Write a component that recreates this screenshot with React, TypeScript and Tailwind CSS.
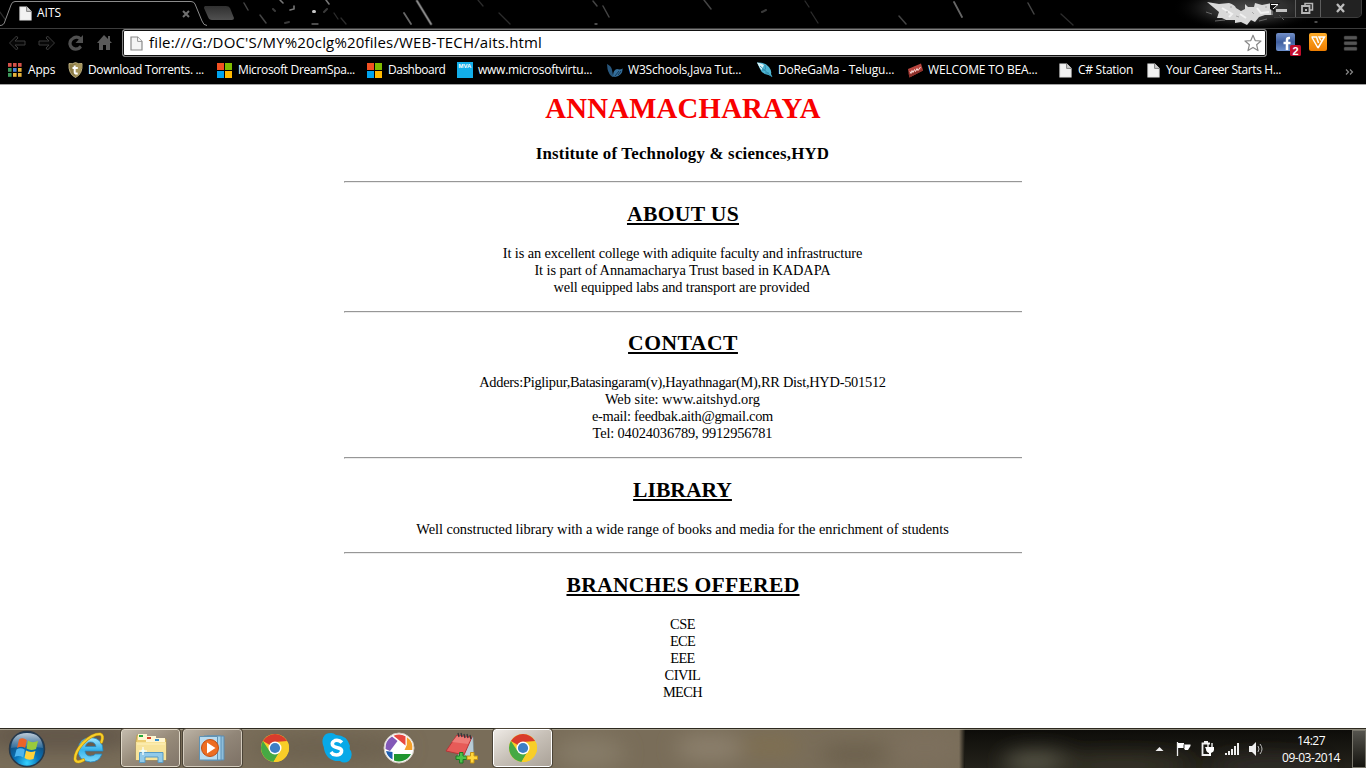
import React from "react";

type Line = { text: string; tracking?: string };

function PageIcon({ outline = false }: { outline?: boolean }) {
  return (
    <svg width="13" height="15" viewBox="0 0 13 15" className="shrink-0">
      <path
        d="M1 1H7.6L12 5.4V14H1Z"
        fill={outline ? "#f4f4f4" : "#f2f2f2"}
        stroke={outline ? "#8a8a8a" : "#e4e4e4"}
        strokeWidth="1.2"
      />
      <path d="M7.6 1V5.4H12" fill={outline ? "#fff" : "#cfcfcf"} stroke={outline ? "#8a8a8a" : "#777"} strokeWidth="0.9" />
    </svg>
  );
}

function AppsIcon() {
  const colors = ["#d5524a", "#d5524a", "#d5524a", "#3d9b5c", "#4a83d8", "#e6b23a", "#3d9b5c", "#e6b23a", "#e6b23a"];
  return (
    <svg width="14" height="14" viewBox="0 0 14 14">
      {colors.map((c, i) => (
        <rect key={i} x={(i % 3) * 5} y={Math.floor(i / 3) * 5} width="3.6" height="3.8" fill={c} />
      ))}
    </svg>
  );
}

function ShieldIcon() {
  return (
    <svg width="15" height="16" viewBox="0 0 15 16">
      <path d="M1 1.6Q4.5 2.4 7.5.6Q10.5 2.4 14 1.6Q14.8 12 7.5 15.5Q.2 12 1 1.6Z" fill="#8b7b45" stroke="#c2b482" strokeWidth="1" />
      <path d="M7.5 1V15Q13.8 11.5 13.4 2Q10 2.5 7.5 1Z" fill="#a7965b" />
      <path d="M6.7 3.5V10.3Q6.700 12 9.700 11.500M4.500 6H9.800" fill="none" stroke="#fff" strokeWidth="2" />
    </svg>
  );
}

function MicrosoftIcon() {
  return (
    <svg width="15" height="15" viewBox="0 0 15 15">
      <path d="M0 0H7V7H0Z" fill="#f25022" />
      <path d="M8 0H15V7H8Z" fill="#7fba00" />
      <path d="M0 8H7V15H0Z" fill="#00a4ef" />
      <path d="M8 8H15V15H8Z" fill="#ffb900" />
    </svg>
  );
}

function MvaIcon() {
  return (
    <span className="flex h-4 w-4 justify-center bg-[#12aeea] font-['Liberation_Sans',sans-serif] text-[6px] leading-[9px] font-bold text-white">
      MVA
    </span>
  );
}

function WingIcon() {
  return (
    <svg width="16" height="15" viewBox="0 0 16 15">
      <path d="M0 1Q4.500 3 5 7L6 12L7.500 13.500L5.500 14Q1.500 11 .5 6Z" fill="#28577d" />
      <path d="M6 13Q6 7 10 6Q13 7 15.700 5.500Q15.500 13 8 14Z" fill="#346f9d" />
      <path d="M8 13L12 8M11 12L14 8" stroke="#0d2a42" strokeWidth=".8" />
    </svg>
  );
}

function FeatherIcon() {
  return (
    <svg width="16" height="16" viewBox="0 0 16 16">
      <path d="M0 .5Q8 0 12 5Q15 9 14 12L15.500 15L11.500 13Q5 12 3 7Z" fill="#4db5d3" />
      <path d="M0 .5Q4 1 7 3L4.500 8Q2 5 0 .5Z" fill="#d9f3f8" />
      <path d="M3 4L15 15M5 8L9 8M8 11L12 11M8 3L8.500 7" stroke="#2b86a8" strokeWidth=".8" />
    </svg>
  );
}

function BeamIcon() {
  return (
    <svg width="17" height="15" viewBox="0 0 17 15">
      <path d="M1 6L14 .5L16 7.500L2.500 14.500Z" fill="#b8453e" />
      <path d="M1 9L2.500 14.500L16 7.500L15.500 6L2 11Z" fill="#8c302b" />
      <path d="M3 8.500L4 10.500L5 7.500L6 9.500L7.500 6.500L8.500 8.500L10 5.500L11 7.500L13.500 4" fill="none" stroke="#f3d5d2" strokeWidth="1" />
    </svg>
  );
}

const bookmarks: { icon: React.ReactNode; label: string; item: string; slot: string; text: string }[] = [
  { icon: <AppsIcon />, label: "Apps", item: "w-[60px]", slot: "w-5", text: "tracking-[-0.2px]" },
  { icon: <ShieldIcon />, label: "Download Torrents. ...", item: "w-[149px]", slot: "w-5", text: "tracking-[-0.34px]" },
  { icon: <MicrosoftIcon />, label: "Microsoft DreamSpa...", item: "w-[150px]", slot: "w-[21px]", text: "tracking-[-0.35px]" },
  { icon: <MicrosoftIcon />, label: "Dashboard", item: "w-[90px]", slot: "w-[21px]", text: "tracking-[-0.5px]" },
  { icon: <MvaIcon />, label: "www.microsoftvirtu...", item: "w-[150px]", slot: "w-[21px]", text: "tracking-[-0.25px]" },
  { icon: <WingIcon />, label: "W3Schools,Java Tut...", item: "w-[150px]", slot: "w-[21px]", text: "tracking-[-0.2px]" },
  { icon: <FeatherIcon />, label: "DoReGaMa - Telugu...", item: "w-[150px]", slot: "w-[21px]", text: "tracking-[-0.2px]" },
  { icon: <BeamIcon />, label: "WELCOME TO BEA...", item: "w-[152px]", slot: "w-[21px]", text: "tracking-[-0.15px]" },
  { icon: <PageIcon />, label: "C# Station", item: "w-[88px]", slot: "w-[19px]", text: "tracking-[-0.28px]" },
  { icon: <PageIcon />, label: "Your Career Starts H...", item: "w-[150px]", slot: "w-[19px]", text: "tracking-[-0.38px]" },
];

function RainBackdrop() {
  return (
    <svg className="absolute inset-0" width="1366" height="28" viewBox="0 0 1366 28">
      <defs>
        <radialGradient id="glow"><stop stopColor="#4a4a4a" /><stop offset=".5" stopColor="#2c2c2c" /><stop offset="1" stopColor="#000" stopOpacity="0" /></radialGradient>
      </defs>
      <ellipse cx="1248" cy="8" rx="76" ry="24" fill="url(#glow)" />
      <g fill="none" strokeLinecap="round">
        <path d="M417 1L431 24" strokeWidth="3" stroke="#333" />
        <path d="M417 1L431 24" strokeWidth="1.500" stroke="#8a8a8a" />
        <path d="M404 13L411 24M954 2L962 17" strokeWidth="1.800" stroke="#666" />
        <path d="M260 15L266 23M244 3L248 10M593 1L597 6M603 6L609 17M704 0L711 9M1028 3L1034 14M899 16L906 24" strokeWidth="1.500" stroke="#444" />
        <path d="M805 1L809 7M811 12L818 23M478 0L483 6M499 13L510 24M334 13L338 19M341 18L346 24M1061 14L1073 25M0 12L7 22" strokeWidth="1.300" stroke="#2c2c2c" />
        <path d="M280 0L283 3M326 0L329 4M290 10L294 9L294 6" strokeWidth="1.600" stroke="#777" />
        <path d="M595 24H597M312 24H318M1315 22H1317" strokeWidth="1.300" stroke="#666" />
        <path d="M313.500 11.500H314.500" strokeWidth="3" stroke="#c8c8c8" />
        <path d="M324 12L327 9M762 12L766 10M273 9L275 11M285 23L289 22" strokeWidth="2" stroke="#3a3a3a" />
      </g>
      <path
        d="M1207 2L1219 4L1229 3Q1235 5 1236 8L1241 11L1245 9L1245 4L1248 7L1254 7L1255 3L1262 5L1272 3L1273 15L1265 15L1259 17L1255 22L1251 20L1247 25L1241 22L1235 23V20L1226 20L1222 18L1217 18L1219 12Z"
        fill="#d9d9d9"
      />
      <path d="M1222 8L1232 14L1229 17M1257 8L1261 13L1269 12M1240 14L1246 18" stroke="#f2f2f2" strokeWidth="2" fill="none" />
      <path d="M1226 12H1228M1236 16L1239 17M1252 12L1254 14M1265 7H1267M1230 7H1232" stroke="#aaa" />
      <path d="M1215 21L1225 20M1259 21L1267 19M1279 15L1284 20M1206 12L1212 14" stroke="#666" strokeWidth="1" />
    </svg>
  );
}

function TabStrip() {
  return (
    <div className="relative flex h-7 items-start bg-black">
      <RainBackdrop />
      <svg className="absolute inset-0" width="240" height="28" viewBox="0 0 240 28">
        <path d="M0 25Q4 25 5 21L11 5Q12 1.500 15 1.500H191Q194 1.500 195 4L202 21Q203.500 25 207 25V28H0Z" fill="#000" />
        <path d="M0 25.500Q4 25.500 5 21L11 5Q12 1.500 15 1.500H191Q194 1.500 195 4L202 21Q203.500 25.500 207 25.500" fill="none" stroke="#8b8b8b" />
        <defs>
          <linearGradient id="newtab" x2="0" y2="1"><stop stopColor="#303030" /><stop offset="1" stopColor="#505050" /></linearGradient>
        </defs>
        <path d="M205 6H226Q229 6 230 8L234 18Q234 20 232 20H212Q209 20 208 17L204 8Q204 6.500 205 6Z" fill="url(#newtab)" />
      </svg>
      <div className="relative flex h-[26px] w-[192px] items-center pl-[19px]">
        <PageIcon />
        <span className="ml-[5px] text-[12px] leading-4 text-white">AITS</span>
        <svg className="mt-px mr-[2px] ml-auto" width="8" height="8" viewBox="0 0 8 8">
          <path d="M1 1L7 7M7 1L1 7" stroke="#707070" strokeWidth="2" />
        </svg>
      </div>
      <svg className="relative mr-[4px] ml-auto" width="92" height="18" viewBox="0 0 92 18">
        <path d="M25 0H91V13Q91 17 87 17H25Z" fill="#222" />
        <path d="M1 0H25V17H5Q1 17 1 13Z" fill="#333" opacity=".55" />
        <path d="M25.500 0V17M50.500 0V17" stroke="#5d5d5d" />
        <path d="M4 17.500H87Q91.500 17 91.500 13V0" stroke="#3d3d3d" fill="none" />
        <path d="M6 9H17V12H6Z" fill="#c4c4c4" />
        <path d="M0 3H10L5 8V12L0 9Z" fill="#151515" />
        <path d="M1 4.500H8L3 9" fill="none" stroke="#fff" />
        <path d="M35 6V3.500H42.500V10H40" fill="none" stroke="#b5b5b5" strokeWidth="1.500" />
        <path d="M32 6H39.500V13H32Z" fill="none" stroke="#b5b5b5" strokeWidth="1.800" />
        <path d="M35 9H37V11H35Z" fill="#b5b5b5" />
        <path d="M67 4L74 12M74 4L67 12" stroke="#bcbcbc" strokeWidth="2.300" />
      </svg>
    </div>
  );
}

function Toolbar() {
  return (
    <div className="flex h-[29px] items-center border-t border-[#3c3c3c] bg-black">
      <svg width="122" height="28" viewBox="0 0 122 28" className="shrink-0">
        <path d="M9.500 14L16.500 7L18 9L15 12H25V16H15L18 19L16.500 21Z" fill="#070707" stroke="#3b3b3b" />
        <path d="M54.500 14L47.500 7L46 9L49 12H39V16H49L46 19L47.500 21Z" fill="#070707" stroke="#3b3b3b" />
        <path d="M80.500 10Q77.500 7 73.500 9Q68.500 12 70.500 17Q73.500 21.500 78.500 19.500L81 17.500" fill="none" stroke="#505050" strokeWidth="3.200" />
        <path d="M83 6V14H75.500Z" fill="#505050" />
        <path d="M104 6L112 14H110V21H106V16H103V21H99V14H97Z" fill="#5a5a5a" />
        <path d="M108 7H110V12H108Z" fill="#5a5a5a" />
      </svg>
      <div className="flex h-7 w-[1145px] shrink-0 items-center rounded-[3px] border border-[#7f7f7f] bg-white pr-[4px] pl-[7px] shadow-[inset_0_0_0_1px_#111]">
        <PageIcon outline />
        <span className="ml-[6px] pb-[2px] text-[15px] leading-5 tracking-[0.16px] whitespace-nowrap text-black">
          file:///G:/DOC'S/MY%20clg%20files/WEB-TECH/aits.html
        </span>
        <svg className="ml-auto" width="18" height="18" viewBox="0 0 18 18">
          <path d="M9 1.200L11.200 6.600L17 7L12.600 10.700L14 16.600L9 13.400L4 16.600L5.400 10.700L1 7L6.800 6.600Z" fill="#fff" stroke="#888" strokeWidth="1.200" strokeLinejoin="round" />
        </svg>
      </div>
      <svg className="shrink-0" width="99" height="28" viewBox="0 0 99 28">
        <defs>
          <linearGradient id="fb" x2="0" y2="1"><stop stopColor="#7390c9" /><stop offset=".5" stopColor="#405f9f" /><stop offset="1" stopColor="#6f91ce" /></linearGradient>
          <linearGradient id="vor" x2="0" y2="1"><stop stopColor="#ffad29" /><stop offset="1" stopColor="#ed7d00" /></linearGradient>
        </defs>
        <rect x="9" y="4" width="19" height="18" rx="2" fill="url(#fb)" />
        <path d="M23 9H22Q20 9 20 11V21M16.500 14H23.500" fill="none" stroke="#fff" strokeWidth="2.500" />
        <rect x="23" y="16" width="11" height="11" rx="1.500" fill="#c10d2c" />
        <text x="28.500" y="25.500" textAnchor="middle" fontFamily="Liberation Sans" fontSize="11" fontWeight="700" fill="#fff">2</text>
        <rect x="42" y="4" width="18" height="18" rx="2" fill="url(#vor)" />
        <path d="M44.500 8H49.500L51.500 14M51 19L45 8.500M51 19L57.500 8H52L54 11.500" fill="none" stroke="#fff" strokeWidth="1.500" />
        <g fill="#555" stroke="#2d2d2d" strokeWidth=".5">
          <rect x="77" y="7" width="13" height="3.500" rx="1" /><rect x="77" y="12.500" width="13" height="3.500" rx="1" /><rect x="77" y="18" width="13" height="3.500" rx="1" />
        </g>
      </svg>
    </div>
  );
}

function BookmarksBar() {
  return (
    <div className="flex h-[27px] items-center bg-black pl-2 text-[12px] leading-4 text-white">
      {bookmarks.map((b) => (
        <div key={b.label} className={`flex shrink-0 items-center pb-px ${b.item}`}>
          <span className={`flex shrink-0 ${b.slot}`}>{b.icon}</span>
          <span className={`whitespace-nowrap ${b.text}`}>{b.label}</span>
        </div>
      ))}
      <svg className="mt-[2px] mr-[12px] ml-auto" width="9" height="8" viewBox="0 0 9 8">
        <path d="M1 1.500L3.500 4L1 6.500M5 1.500L7.500 4L5 6.500" fill="none" stroke="#888" strokeWidth="1.200" />
      </svg>
    </div>
  );
}

function Rule({ className }: { className: string }) {
  return <hr className={`h-[2px] w-[678px] border-t border-b border-l border-t-[#979797] border-b-[#ececec] border-l-[#a5a5a5] ${className}`} />;
}

function Section({ title, titleClass, lines }: { title: string; titleClass: string; lines: Line[] }) {
  return (
    <section className="flex flex-col items-center">
      <h2 className={`pt-px text-[21.6px] leading-[25px] font-bold underline decoration-2 underline-offset-2 [text-decoration-skip-ink:none] ${titleClass}`}>{title}</h2>
      <div className="mt-[18px] flex flex-col items-center pr-px text-[14.4px] leading-[17px] whitespace-nowrap">
        {lines.map((l) => (
          <p key={l.text} className={l.tracking ?? ""}>{l.text}</p>
        ))}
      </div>
    </section>
  );
}

function WebPage() {
  return (
    <main className="flex h-[644px] flex-col items-center border-t border-[#a2a2a2] bg-white pt-[7px] font-['Liberation_Serif','Times_New_Roman',serif] text-black">
      <h1 className="text-[28.8px] leading-8 font-bold tracking-[0.2px] text-[#f80000]">ANNAMACHARAYA</h1>
      <h3 className="mt-5 pr-px text-[16.85px] leading-[19px] font-bold tracking-[0.2px]">Institute of Technology &amp; sciences,HYD</h3>
      <Rule className="mt-[18px] mb-[18px]" />
      <Section
        title="ABOUT US"
        titleClass="tracking-[0.33px]"
        lines={[
          { text: "It is an excellent college with adiquite faculty and infrastructure", tracking: "tracking-[-0.13px]" },
          { text: "It is part of Annamacharya Trust based in KADAPA", tracking: "tracking-[-0.08px]" },
          { text: "well equipped labs and transport are provided", tracking: "tracking-[-0.155px] pr-[2px]" },
        ]}
      />
      <Rule className="mt-[15px] mb-[17px]" />
      <Section
        title="CONTACT"
        titleClass="tracking-[0.5px]"
        lines={[
          { text: "Adders:Piglipur,Batasingaram(v),Hayathnagar(M),RR Dist,HYD-501512", tracking: "tracking-[-0.26px]" },
          { text: "Web site: www.aitshyd.org" },
          { text: "e-mail: feedbak.aith@gmail.com", tracking: "tracking-[-0.28px]" },
          { text: "Tel: 04024036789, 9912956781", tracking: "tracking-[-0.15px]" },
        ]}
      />
      <Rule className="mt-[15px] mb-[18px]" />
      <Section
        title="LIBRARY"
        titleClass="pr-px"
        lines={[{ text: "Well constructed library with a wide range of books and media for the enrichment of students", tracking: "tracking-[-0.06px]" }]}
      />
      <Rule className="mt-[14px] mb-[18px]" />
      <Section
        title="BRANCHES OFFERED"
        titleClass="tracking-[0.28px]"
        lines={[
          { text: "CSE", tracking: "tracking-[-0.5px]" },
          { text: "ECE", tracking: "tracking-[-0.8px]" },
          { text: "EEE", tracking: "tracking-[-0.6px]" },
          { text: "CIVIL", tracking: "tracking-[-0.5px]" },
          { text: "MECH", tracking: "tracking-[-0.6px]" },
        ]}
      />
    </main>
  );
}

function StartOrb() {
  return (
    <svg width="38" height="38" viewBox="0 0 38 38">
      <defs>
        <radialGradient id="orb" cx=".5" cy=".9" r=".85"><stop stopColor="#35d2ff" /><stop offset=".4" stopColor="#0873b8" /><stop offset="1" stopColor="#17385c" /></radialGradient>
        <linearGradient id="orbshine" x2="0" y2="1"><stop stopColor="#e9f4fb" stopOpacity=".8" /><stop offset="1" stopColor="#b8d4e8" stopOpacity=".2" /></linearGradient>
      </defs>
      <circle cx="19" cy="19" r="17.500" fill="url(#orb)" stroke="#27394a" strokeWidth="1.500" />
      <path d="M3 18Q4 3 19 3T35 18Q19 15 3 18Z" fill="url(#orbshine)" />
      <path d="M11 9.500Q14.500 7 18.800 10L17.200 18Q13 15.500 9 18Z" fill="#ec6428" />
      <path d="M20 10.500Q24 13.500 30 11L28 19Q22.500 21 18.500 18.500Z" fill="#9aca3c" />
      <path d="M8.500 19.500Q12.500 17 16.800 19.800L15.200 27.500Q11 25 6.500 27Z" fill="#4cb4ee" />
      <path d="M18 20.500Q22 23 27.500 21L25.500 29Q20.500 31 16.500 28Z" fill="#ffd23b" />
    </svg>
  );
}

function ExplorerE() {
  return (
    <svg width="34" height="34" viewBox="0 0 34 34">
      <defs><linearGradient id="ie" x2="0" y2="1"><stop stopColor="#a5e8ff" /><stop offset=".5" stopColor="#37b4ec" /><stop offset="1" stopColor="#7fdafa" /></linearGradient></defs>
      <path d="M31 20H13Q13.500 25 18.500 25Q21.500 25 23.500 23H30Q27 31 18.500 31Q6 30 6 18.500Q7 7 18.500 6.500Q31 7 31 20ZM13.500 15.500H24Q23 11 18.500 11Q14.500 11 13.500 15.500Z" fill="url(#ie)" stroke="#2588c2" strokeWidth=".8" />
      <path d="M29.500 11Q32 4 28 3Q20 3 11 12Q3 21 3 28Q4 33 11.500 29" fill="none" stroke="#b98b0b" strokeWidth="3.200" strokeLinecap="round" />
      <path d="M29.500 11Q32 4 28 3Q20 3 11 12Q3 21 3 28Q4 33 11.500 29" fill="none" stroke="#f7cf2b" strokeWidth="2.200" strokeLinecap="round" />
    </svg>
  );
}

function FolderIcon() {
  return (
    <svg width="34" height="32" viewBox="0 0 34 32">
      <path d="M2 9L3 3H12L14 5H21L23 7H32V28H2Z" fill="#edcd70" stroke="#b59a4f" strokeWidth=".8" />
      <path d="M4 2H13V8H4ZM12 4H22V10H12ZM20 6H31V11H20Z" fill="#fff6d1" />
      <path d="M5 3H9V5H5Z" fill="#25a83c" /><path d="M13 5H17V7H13Z" fill="#d6432b" /><path d="M21 7H25V9H21Z" fill="#338fd0" />
      <path d="M2 10H32V28H2Z" fill="#f7e39a" />
      <path d="M3 12H31" stroke="#fff2bd" strokeWidth="1" />
      <path d="M5.500 30.500V20.500H29V30.500H24V25H11V30.500Z" fill="#91cae9" stroke="#579bc4" />
      <path d="M9 15V23M5 19H13" stroke="#fff" strokeWidth="1.200" /><circle cx="9" cy="19" r="1.800" fill="#eaffff" />
    </svg>
  );
}

function MediaIcon() {
  return (
    <svg width="30" height="28" viewBox="0 0 30 28">
      <path d="M9 2H26V26H9Z" fill="#8ebdd9" stroke="#5b8aae" />
      <path d="M6 2H23V26H6Z" fill="#a8d4eb" stroke="#5c91b8" />
      <path d="M1.500 2.500H19.500V26H1.500Z" fill="#badcf0" stroke="#6092b2" />
      <circle cx="12" cy="14" r="8.500" fill="#ed6d22" stroke="#c24e12" />
      <path d="M9 8.500L17.500 14L9 19.500Z" fill="#fff" />
    </svg>
  );
}

function ChromeIcon() {
  return (
    <svg width="30" height="30" viewBox="0 0 30 30">
      <circle cx="15" cy="15" r="14" fill="#f8ce28" />
      <path d="M15 15L2.900 8A14 14 0 0 1 27.100 8L15 9Z" fill="#d93c2c" />
      <path d="M2.900 8A14 14 0 0 0 13.500 28.900L20 18L15 15L9.500 18Z" fill="#46a944" />
      <path d="M15 9H27.600A14 14 0 0 1 13.500 28.900L20 18Z" fill="#f8ce28" />
      <circle cx="15" cy="15" r="6.500" fill="#fff" />
      <circle cx="15" cy="15" r="5.100" fill="#3d7fc6" />
    </svg>
  );
}

function SkypeIcon() {
  return (
    <svg width="30" height="30" viewBox="0 0 30 30">
      <path d="M9 0Q12 0 14 2Q25 2 28 13Q27 16 29 18Q31 24 27 28Q22 31 18 28Q5 29 2 16Q2 14 1 12Q-1 5 4 1Q6 0 9 0Z" fill="#08a9e8" />
      <path d="M20 9.500Q17 6.500 13 7.500Q9.500 9 10.500 12Q11.500 14 15.500 14.700Q20.500 15.700 19.500 19Q18 22.500 13 21.800Q10.500 21.500 9 19" fill="none" stroke="#fff" strokeWidth="3.500" />
    </svg>
  );
}

function PicasaIcon() {
  return (
    <svg width="32" height="32" viewBox="0 0 32 32">
      <circle cx="16" cy="16" r="15" fill="#fff" stroke="#cfc8bd" />
      <path d="M2.500 17A13.500 13.500 0 0 1 9 4.500L14.500 9L7 19Z" fill="#8359b8" />
      <path d="M10.500 3.800A13.500 13.500 0 0 1 22.500 4.200V13.500L14 6.500Z" fill="#e84840" />
      <path d="M23.800 5A13.500 13.500 0 0 1 29.300 18H21.500L23.800 13Z" fill="#f5a02a" />
      <path d="M11 22H28A13.500 13.500 0 0 1 11 28.500Z" fill="#20952f" />
      <path d="M3 19L9.500 20V27.500A13.500 13.500 0 0 1 3 19Z" fill="#1f5fb0" />
    </svg>
  );
}

function NotesIcon() {
  return (
    <svg width="34" height="32" viewBox="0 0 34 32">
      <path d="M14 3L29 5L30 24L14 27Z" fill="#b8ccd6" stroke="#71838b" strokeWidth=".6" />
      <path d="M13 3L28 5L20 23L2 19Z" fill="#e75b58" stroke="#b63538" />
      <path d="M13 4L27 6L24 12L8 10Z" fill="#ee7d78" />
      <path d="M14 1L15 5M17 1L18 5M20 2L21 6M23 2L24 6M26 3L27 7" stroke="#35373a" strokeWidth="1.300" />
      <path d="M15.500 20.500H19V24H22.500V27.500H19V31H15.500V27.500H12V24H15.500Z" fill="#4dc24a" stroke="#1b7a25" />
      <path d="M26.500 20.500H30V24H33.500V27.500H30V31H26.500V27.500H23V24H26.500Z" fill="#ffd63d" stroke="#c69415" />
    </svg>
  );
}

const tasks: { name: string; icon: React.ReactNode; frame: string }[] = [
  { name: "ie", icon: <ExplorerE />, frame: "border-transparent" },
  { name: "files", icon: <FolderIcon />, frame: "border-[#e0d8c8] bg-linear-to-br from-[#c4bbad] via-[#978b7a] to-[#82766a] outline outline-[#4b4336]" },
  { name: "player", icon: <MediaIcon />, frame: "border-[#d3cbbd] bg-linear-to-br from-[#bbb2a4] via-[#918678] to-[#7d7165] outline outline-[#4b4336]" },
  { name: "chrome", icon: <ChromeIcon />, frame: "border-transparent" },
  { name: "skype", icon: <SkypeIcon />, frame: "border-transparent" },
  { name: "picasa", icon: <PicasaIcon />, frame: "border-transparent" },
  { name: "notes", icon: <NotesIcon />, frame: "border-transparent" },
  { name: "browser", icon: <ChromeIcon />, frame: "border-white bg-linear-to-br from-[#eeeae5] via-[#c7c0b7] to-[#aaa298] outline outline-[#4b4336]" },
];

function TaskbarBackdrop() {
  return (
    <svg className="absolute inset-0" width="1366" height="40" viewBox="0 0 1366 40">
      <defs>
        <filter id="wide" x="-20%" y="-80%" width="140%" height="260%"><feGaussianBlur stdDeviation="10" /></filter>
        <linearGradient id="edge"><stop stopColor="#15140f" stopOpacity="0" /><stop offset="1" stopColor="#15140f" /></linearGradient>
        <linearGradient id="shade" x2="0" y2="1"><stop stopColor="#0c0b08" /><stop offset=".35" stopColor="#15140f" /><stop offset="1" stopColor="#24221b" /></linearGradient>
      </defs>
      <rect width="1366" height="40" fill="#796d59" />
      <g filter="url(#wide)">
        <ellipse cx="60" cy="8" rx="80" ry="16" fill="#62574a" /><ellipse cx="330" cy="20" rx="80" ry="15" fill="#6d6250" />
        <ellipse cx="590" cy="25" rx="35" ry="16" fill="#867b67" /><ellipse cx="710" cy="20" rx="35" ry="14" fill="#8b7f6c" />
        <ellipse cx="770" cy="18" rx="30" ry="9" fill="#80704f" /><ellipse cx="855" cy="27" rx="35" ry="10" fill="#6b5f4b" />
        <ellipse cx="925" cy="20" rx="35" ry="18" fill="#7d705d" />
      </g>
      <rect x="959" width="6" height="40" fill="url(#edge)" />
      <rect x="965" width="401" height="40" fill="url(#shade)" />
      <g filter="url(#wide)">
        <ellipse cx="1038" cy="34" rx="36" ry="11" fill="#5a5948" /><ellipse cx="1120" cy="37" rx="70" ry="9" fill="#3b382c" />
        <ellipse cx="1270" cy="38" rx="60" ry="10" fill="#332d29" />
      </g>
      <rect width="1366" height="1" fill="#2d291f" />
      <rect y="1" width="1366" height="1" fill="#b9b5a4" opacity=".75" />
    </svg>
  );
}

function Tray() {
  return (
    <svg width="120" height="20" viewBox="0 0 120 20">
      <path d="M6.500 12L10.500 8L14.500 12Z" fill="#eee" />
      <path d="M28.500 3V17" stroke="#eee" strokeWidth="1.300" />
      <path d="M29 4H35V5.500H41.500V7L39 11H36L35 9H29Z" fill="#fff" />
      <path d="M35 5.500V9" stroke="#333" />
      <path d="M61 4.500H53.500V16H60M55 3H59" fill="none" stroke="#eee" strokeWidth="1.800" />
      <path d="M56 8H65V11Q65 13 62 14V17H60V14Q57 13 57 10Z" fill="#fff" /><path d="M59 4V8M63 4V8" stroke="#fff" strokeWidth="1.300" />
      <path d="M76 14H78V16H76ZM79 12H81V16H79ZM82 10H84V16H82ZM85 7H87V16H85ZM88 4H90V16H88Z" fill="#eee" />
      <path d="M100 7H103L107 3V17L103 13H100Z" fill="#eee" />
      <path d="M109 7Q111 10 109 13M111 5Q115 10 111 15" fill="none" stroke="#bbb" strokeWidth="1" />
    </svg>
  );
}

function Taskbar() {
  return (
    <footer className="relative h-10 overflow-hidden">
      <TaskbarBackdrop />
      <div className="relative flex h-10 pt-px">
        <div className="flex w-[59px] items-center pl-2"><StartOrb /></div>
        <div className="flex gap-[3px]">
          {tasks.map((t) => (
            <div key={t.name} className={`flex h-[38px] w-[59px] items-center justify-center rounded-[3px] border ${t.frame}`}>{t.icon}</div>
          ))}
        </div>
        <div className="ml-auto flex items-center">
          <Tray />
          <div className="ml-[12px] flex w-[60px] flex-col items-center text-[12px] leading-[17px] text-white">
            <span className="tracking-[-0.5px]">14:27</span>
            <span className="tracking-[-0.46px]">09-03-2014</span>
          </div>
          <div className="ml-[11px] h-[38px] w-[14px] border border-[#77756b] bg-linear-to-b from-[#55544e] via-[#34332d] to-[#151410]" />
        </div>
      </div>
    </footer>
  );
}

export default function App() {
  return (
    <div className="flex h-[768px] w-[1366px] flex-col overflow-hidden bg-black font-['Open_Sans','Noto_Sans',sans-serif]">
      <header>
        <TabStrip />
        <Toolbar />
        <BookmarksBar />
      </header>
      <WebPage />
      <Taskbar />
    </div>
  );
}
